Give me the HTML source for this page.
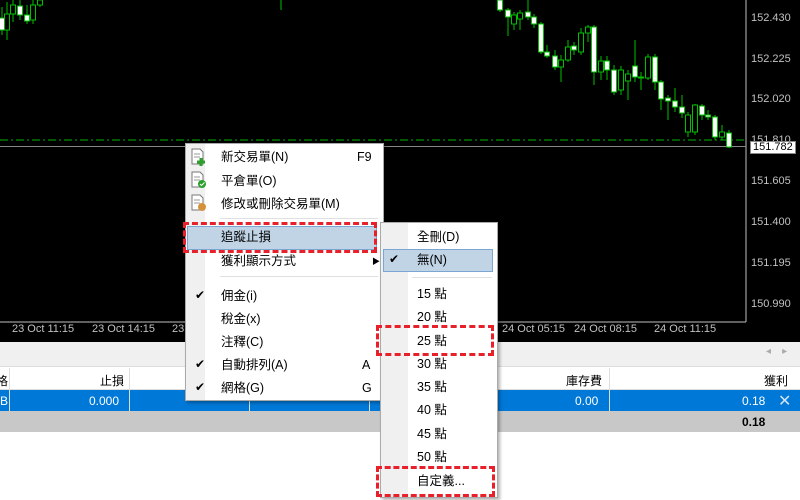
<!DOCTYPE html>
<html><head><meta charset="utf-8"><style>
*{margin:0;padding:0;box-sizing:border-box}
body{width:800px;height:500px;overflow:hidden;background:#fff;position:relative;font-family:"Liberation Sans","Noto Sans CJK TC",sans-serif;font-size:12px;color:#000}
.a{position:absolute}
svg.c rect{width:5px;transform:translateX(-1px)}
.pl{position:absolute;left:751px;color:#c0c0c0;font-size:11px;line-height:12px}
.tl{position:absolute;top:323px;color:#c0c0c0;font-size:11px;white-space:nowrap}
.mi{position:absolute;left:221px;font-size:12.5px;line-height:16px;white-space:nowrap}
.si{position:absolute;left:417px;font-size:12.5px;line-height:16px;white-space:nowrap}
.ck{position:absolute;font-size:12px}
.rd{position:absolute;border:3px dashed #e8202a}
.th{position:absolute;top:372px;font-size:12px}
</style></head><body>
<div class="a" style="left:0;top:0;width:800px;height:342px;background:#000"></div>
<svg class="a c" style="left:0;top:0" width="800" height="342">
<line x1="746" y1="0" x2="746" y2="322" stroke="#c0c0c0"/>
<line x1="0" y1="322" x2="746" y2="322" stroke="#c0c0c0"/>
<line x1="0" y1="140" x2="746" y2="140" stroke="#00b000" stroke-dasharray="8,3,2,3"/>
<line x1="0" y1="146.5" x2="746" y2="146.5" stroke="#888"/>
<g stroke="#00c000" stroke-width="1">
<line x1="2" y1="7" x2="2" y2="35"/><rect x="0.5" y="18" width="3" height="12" fill="#fff"/>
<line x1="7" y1="2" x2="7" y2="40"/><rect x="5.5" y="14" width="3" height="16" fill="#000"/>
<line x1="13" y1="0" x2="13" y2="22"/><rect x="11.5" y="5" width="3" height="9" fill="#000"/>
<line x1="20" y1="0" x2="20" y2="20"/><rect x="18.5" y="6" width="3" height="9" fill="#fff"/>
<line x1="27" y1="5" x2="27" y2="24"/><rect x="25.5" y="15" width="3" height="6" fill="#fff"/>
<line x1="33" y1="0" x2="33" y2="24"/><rect x="31.5" y="5" width="3" height="15" fill="#000"/>
<line x1="40" y1="0" x2="40" y2="7"/><rect x="38.5" y="0" width="3" height="5" fill="#000"/>
<line x1="281" y1="0" x2="281" y2="10"/>
<line x1="500" y1="0" x2="500" y2="12"/><rect x="498.5" y="0" width="3" height="10" fill="#fff"/>
<line x1="508" y1="8" x2="508" y2="36"/><rect x="506.5" y="10" width="3" height="7" fill="#fff"/>
<line x1="514" y1="12" x2="514" y2="30"/><rect x="512.5" y="15" width="3" height="9" fill="#000"/>
<line x1="520" y1="10" x2="520" y2="30"/><rect x="518.5" y="13" width="3" height="6" fill="#000"/>
<line x1="528" y1="0" x2="528" y2="20"/><rect x="526.5" y="12" width="3" height="5" fill="#fff"/>
<line x1="534" y1="14" x2="534" y2="28"/><rect x="532.5" y="17" width="3" height="7" fill="#fff"/>
<line x1="541" y1="22" x2="541" y2="54"/><rect x="539.5" y="24" width="3" height="28" fill="#fff"/>
<line x1="547" y1="45" x2="547" y2="58"/><rect x="545.5" y="52" width="3" height="4" fill="#fff"/>
<line x1="555" y1="50" x2="555" y2="70"/><rect x="553.5" y="56" width="3" height="11" fill="#fff"/>
<line x1="561" y1="55" x2="561" y2="82"/><rect x="559.5" y="60" width="3" height="7" fill="#000"/>
<line x1="568" y1="40" x2="568" y2="62"/><rect x="566.5" y="47" width="3" height="13" fill="#000"/>
<line x1="574" y1="42" x2="574" y2="55"/><rect x="572.5" y="46" width="3" height="4" fill="#fff"/>
<line x1="581" y1="28" x2="581" y2="55"/><rect x="579.5" y="33" width="3" height="19" fill="#000"/>
<line x1="588" y1="25" x2="588" y2="42"/><rect x="586.5" y="27" width="3" height="6" fill="#000"/>
<line x1="594" y1="25" x2="594" y2="85"/><rect x="592.5" y="27" width="3" height="45" fill="#fff"/>
<line x1="601" y1="56" x2="601" y2="80"/><rect x="599.5" y="61" width="3" height="11" fill="#000"/>
<line x1="607" y1="56" x2="607" y2="80"/><rect x="605.5" y="61" width="3" height="9" fill="#fff"/>
<line x1="614" y1="65" x2="614" y2="95"/><rect x="612.5" y="70" width="3" height="22" fill="#fff"/>
<line x1="621" y1="66" x2="621" y2="95"/><rect x="619.5" y="70" width="3" height="20" fill="#000"/>
<line x1="628" y1="70" x2="628" y2="100"/><rect x="626.5" y="74" width="3" height="7" fill="#000"/>
<line x1="635" y1="40" x2="635" y2="82"/><rect x="633.5" y="66" width="3" height="11" fill="#fff"/>
<line x1="641" y1="72" x2="641" y2="90"/><rect x="639.5" y="77" width="3" height="1" fill="#fff"/>
<line x1="648" y1="54" x2="648" y2="80"/><rect x="646.5" y="57" width="3" height="21" fill="#000"/>
<line x1="655" y1="54" x2="655" y2="90"/><rect x="653.5" y="57" width="3" height="25" fill="#fff"/>
<line x1="661" y1="80" x2="661" y2="110"/><rect x="659.5" y="82" width="3" height="17" fill="#fff"/>
<line x1="668" y1="95" x2="668" y2="120"/><rect x="666.5" y="98" width="3" height="3" fill="#fff"/>
<line x1="675" y1="88" x2="675" y2="112"/><rect x="673.5" y="101" width="3" height="6" fill="#fff"/>
<line x1="682" y1="95" x2="682" y2="118"/><rect x="680.5" y="107" width="3" height="6" fill="#fff"/>
<line x1="688" y1="112" x2="688" y2="137"/><rect x="686.5" y="115" width="3" height="17" fill="#000"/>
<line x1="695" y1="104" x2="695" y2="135"/><rect x="693.5" y="105" width="3" height="27" fill="#000"/>
<line x1="702" y1="104" x2="702" y2="120"/><rect x="700.5" y="106" width="3" height="9" fill="#fff"/>
<line x1="708" y1="110" x2="708" y2="120"/><rect x="706.5" y="115" width="3" height="2" fill="#fff"/>
<line x1="715" y1="115" x2="715" y2="140"/><rect x="713.5" y="117" width="3" height="20" fill="#fff"/>
<line x1="722" y1="125" x2="722" y2="140"/><rect x="720.5" y="132" width="3" height="5" fill="#000"/>
<line x1="729" y1="130" x2="729" y2="148"/><rect x="727.5" y="133" width="3" height="14" fill="#fff"/>
</g>
</svg>
<div class="pl" style="top:12px">152.430</div>
<div class="pl" style="top:53px">152.225</div>
<div class="pl" style="top:93px">152.020</div>
<div class="pl" style="top:134px">151.810</div>
<div class="a" style="left:750px;top:141px;width:46px;height:13px;background:#fff;border:1px solid #888;font-size:11px;line-height:11px;padding-left:2px">151.782</div>
<div class="pl" style="top:175px">151.605</div>
<div class="pl" style="top:216px">151.400</div>
<div class="pl" style="top:257px">151.195</div>
<div class="pl" style="top:298px">150.990</div>
<div class="tl" style="left:12px">23 Oct 11:15</div>
<div class="tl" style="left:92px">23 Oct 14:15</div>
<div class="tl" style="left:172px">23 Oct 17:15</div>
<div class="tl" style="left:502px">24 Oct 05:15</div>
<div class="tl" style="left:574px">24 Oct 08:15</div>
<div class="tl" style="left:654px">24 Oct 11:15</div>
<div class="a" style="left:0;top:342px;width:800px;height:25px;background:#f0f0f0;border-bottom:1px solid #ddd"></div>
<div class="a" style="left:766px;top:346px;color:#aaa;font-size:10px">◂&nbsp;&nbsp;&nbsp;&nbsp;▸</div>
<div class="a" style="left:0;top:368px;width:800px;height:22px;background:#fff;border-bottom:1px solid #ddd"></div>
<div class="a" style="left:0;top:390px;width:800px;height:21px;background:#0078d7"></div>
<div class="a" style="left:0;top:411px;width:800px;height:21px;background:#c8c8c8"></div>
<div class="a" style="left:9px;top:368px;width:1px;height:43px;background:#ddd"></div>
<div class="a" style="left:129px;top:368px;width:1px;height:43px;background:#ddd"></div>
<div class="a" style="left:249px;top:368px;width:1px;height:43px;background:#ddd"></div>
<div class="a" style="left:369px;top:368px;width:1px;height:43px;background:#ddd"></div>
<div class="a" style="left:609px;top:368px;width:1px;height:43px;background:#ddd"></div>
<div class="th" style="left:-4px">格</div>
<div class="th" style="left:100px">止損</div>
<div class="th" style="left:566px">庫存費</div>
<div class="th" style="left:764px">獲利</div>
<div class="a" style="left:0;top:394px;color:#fff">B</div>
<div class="a" style="left:89px;top:394px;color:#fff">0.000</div>
<div class="a" style="left:575px;top:394px;color:#fff">0.00</div>
<div class="a" style="left:742px;top:394px;color:#fff">0.18</div>
<div class="a" style="left:778px;top:391px;color:#d0e4f6;font-size:16px">✕</div>
<div class="a" style="left:742px;top:415px;font-weight:bold">0.18</div>
<div class="a" style="left:185px;top:143px;width:199px;height:258px;background:#fff;border:1px solid #aaa;box-shadow:2px 2px 3px rgba(0,0,0,.3)"></div>
<div class="a" style="left:186px;top:144px;width:19px;height:256px;background:#f0f0f0"></div>
<div class="a" style="left:220px;top:218px;width:158px;height:1px;background:#e0e0e0"></div>
<div class="a" style="left:220px;top:276px;width:158px;height:1px;background:#e0e0e0"></div>
<div class="a" style="left:187px;top:226px;width:190px;height:24px;background:#c0d4e6;border:1px solid #7ca6d2"></div>
<svg class="a" style="left:190px;top:148px" width="20" height="70">
<g fill="#fff" stroke="#777"><path d="M2 1h8l3 3v12H2z"/><path d="M2 24h8l3 3v12H2z"/><path d="M2 47h8l3 3v12H2z"/></g>
<g stroke="#999"><line x1="4" y1="6" x2="10" y2="6"/><line x1="4" y1="9" x2="10" y2="9"/><line x1="4" y1="29" x2="10" y2="29"/><line x1="4" y1="32" x2="10" y2="32"/><line x1="4" y1="52" x2="10" y2="52"/><line x1="4" y1="55" x2="10" y2="55"/></g>
<path d="M11 10v8M7 14h8" stroke="#2ca02c" stroke-width="3"/>
<circle cx="12" cy="36" r="4" fill="#2ca02c"/><path d="M10 36l1.5 1.5 3-3" stroke="#fff" fill="none"/>
<circle cx="12" cy="59" r="4" fill="#d4923c"/>
</svg>
<div class="mi" style="top:149px">新交易單(N)</div><div class="mi" style="left:357px;top:149px">F9</div>
<div class="mi" style="top:173px">平倉單(O)</div>
<div class="mi" style="top:196px">修改或刪除交易單(M)</div>
<div class="mi" style="top:229px">追蹤止損</div>
<div class="mi" style="top:253px">獲利顯示方式</div><div class="a" style="left:372px;top:256px;font-size:8px">▶</div>
<div class="ck" style="left:195px;top:288px">✔</div><div class="mi" style="top:288px">佣金(i)</div>
<div class="mi" style="top:311px">稅金(x)</div>
<div class="mi" style="top:334px">注釋(C)</div>
<div class="ck" style="left:195px;top:357px">✔</div><div class="mi" style="top:357px">自動排列(A)</div><div class="mi" style="left:362px;top:357px">A</div>
<div class="ck" style="left:195px;top:380px">✔</div><div class="mi" style="top:380px">網格(G)</div><div class="mi" style="left:362px;top:380px">G</div>
<div class="a" style="left:380px;top:222px;width:118px;height:276px;background:#fff;border:1px solid #aaa;box-shadow:2px 2px 3px rgba(0,0,0,.3)"></div>
<div class="a" style="left:381px;top:223px;width:27px;height:274px;background:#f0f0f0"></div>
<div class="a" style="left:383px;top:249px;width:110px;height:23px;background:#c0d4e6;border:1px solid #7ca6d2"></div>
<div class="a" style="left:412px;top:277px;width:80px;height:1px;background:#e0e0e0"></div>
<div class="si" style="top:229px">全刪(D)</div>
<div class="ck" style="left:389px;top:252px">✔</div><div class="si" style="top:252px">無(N)</div>
<div class="si" style="top:286px">15 點</div>
<div class="si" style="top:309px">20 點</div>
<div class="si" style="top:333px">25 點</div>
<div class="si" style="top:356px">30 點</div>
<div class="si" style="top:379px">35 點</div>
<div class="si" style="top:402px">40 點</div>
<div class="si" style="top:426px">45 點</div>
<div class="si" style="top:449px">50 點</div>
<div class="si" style="top:473px">自定義...</div>
<div class="rd" style="left:183px;top:222px;width:194px;height:31px"></div>
<div class="rd" style="left:376px;top:325px;width:118px;height:31px"></div>
<div class="rd" style="left:376px;top:466px;width:119px;height:31px"></div>
</body></html>
